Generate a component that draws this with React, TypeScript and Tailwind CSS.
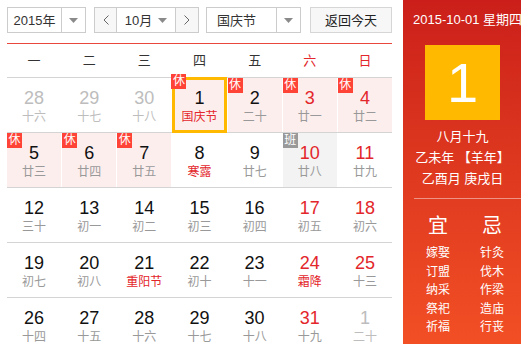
import React from "react";

type Day = {
  n: number;
  l: string;
  other?: boolean;
  red?: boolean;
  fest?: boolean;
  rest?: boolean;
  work?: boolean;
  today?: boolean;
};

const weeks: Day[][] = [
  [
    { n: 28, l: "十六", other: true },
    { n: 29, l: "十七", other: true },
    { n: 30, l: "十八", other: true },
    { n: 1, l: "国庆节", fest: true, rest: true, today: true },
    { n: 2, l: "二十", rest: true },
    { n: 3, l: "廿一", rest: true, red: true },
    { n: 4, l: "廿二", rest: true, red: true },
  ],
  [
    { n: 5, l: "廿三", rest: true },
    { n: 6, l: "廿四", rest: true },
    { n: 7, l: "廿五", rest: true },
    { n: 8, l: "寒露", fest: true },
    { n: 9, l: "廿七" },
    { n: 10, l: "廿八", work: true, red: true },
    { n: 11, l: "廿九", red: true },
  ],
  [
    { n: 12, l: "三十" },
    { n: 13, l: "初一" },
    { n: 14, l: "初二" },
    { n: 15, l: "初三" },
    { n: 16, l: "初四" },
    { n: 17, l: "初五", red: true },
    { n: 18, l: "初六", red: true },
  ],
  [
    { n: 19, l: "初七" },
    { n: 20, l: "初八" },
    { n: 21, l: "重阳节", fest: true },
    { n: 22, l: "初十" },
    { n: 23, l: "十一" },
    { n: 24, l: "霜降", fest: true, red: true },
    { n: 25, l: "十三", red: true },
  ],
  [
    { n: 26, l: "十四" },
    { n: 27, l: "十五" },
    { n: 28, l: "十六" },
    { n: 29, l: "十七" },
    { n: 30, l: "十八" },
    { n: 31, l: "十九", red: true },
    { n: 1, l: "二十", other: true },
  ],
];

const Caret = () => (
  <svg width="9" height="5" viewBox="0 0 9 5">
    <path d="M0 0 L9 0 L4.5 5 Z" fill="#8a8a8a" />
  </svg>
);

const Chevron = ({ dir }: { dir: "l" | "r" }) => (
  <svg width="6" height="10" viewBox="0 0 6 10">
    <path
      d={dir === "l" ? "M5.5 0.5 L1 5 L5.5 9.5" : "M0.5 0.5 L5 5 L0.5 9.5"}
      fill="none"
      stroke="#666"
      strokeWidth="1"
    />
  </svg>
);

function Cell({ d }: { d: Day }) {
  let bg = "bg-white";
  if (d.rest) bg = "bg-[#fdeeee]";
  if (d.work) bg = "bg-[#f3f3f3]";
  let numColor = "text-[#111]";
  if (d.red) numColor = "text-[#e3262b]";
  if (d.other) numColor = "text-[#bdbdbd]";
  let lunarColor = "text-[#999]";
  if (d.fest) lunarColor = "text-[#e3262b]";
  if (d.other) lunarColor = "text-[#bdbdbd]";
  return (
    <div className={`relative h-[54px] ${bg} flex flex-col items-center pt-[10px]`}>
      <div className={`text-[18px] leading-[20px] ${numColor} font-['Liberation_Sans',sans-serif]`}>
        {d.n}
      </div>
      <div className={`text-[12px] leading-[18px] ${lunarColor}`}>{d.l}</div>
      {d.today && (
        <div className="absolute left-0 right-0 -top-px -bottom-px border-[3px] border-[#ffb900]" />
      )}
      {d.rest && (
        <div
          className={`absolute ${d.today ? "-top-[4px] -left-[1px]" : "top-0 left-0"} w-[15px] h-[15px] bg-[#ff4337] text-white text-[12px] leading-[15px] flex items-center justify-center`}
        >
          休
        </div>
      )}
      {d.work && (
        <div className="absolute top-0 left-0 w-[15px] h-[15px] bg-[#999] text-white text-[12px] leading-[15px] flex items-center justify-center">
          班
        </div>
      )}
    </div>
  );
}

export default function App() {
  return (
    <div className="flex w-[521px] h-[344px] overflow-hidden bg-white font-['Liberation_Sans','Noto_Sans_CJK_SC',sans-serif]">
      {/* left */}
      <div className="w-[403px] pl-[7px] pr-[11px] shrink-0">
        {/* toolbar */}
        <div className="h-[43px] pt-[7px] flex items-start text-[13px] text-[#333]">
          <div className="flex h-[26px] w-[79px] border border-[#ccc] bg-white">
            <div className="w-[54px] flex items-center justify-center border-r border-[#ccc] leading-none">
              2015年
            </div>
            <div className="flex-1 flex items-center justify-center">
              <Caret />
            </div>
          </div>
          <div className="ml-[8px] flex h-[26px] w-[105px] border border-[#ccc]">
            <div className="w-[22px] flex items-center justify-center border-r border-[#ccc] bg-[#f7f7f7]">
              <Chevron dir="l" />
            </div>
            <div className="w-[59px] flex items-center justify-center gap-[6px] border-r border-[#ccc] leading-none">
              <span>10月</span>
              <Caret />
            </div>
            <div className="flex-1 flex items-center justify-center bg-[#f7f7f7]">
              <Chevron dir="r" />
            </div>
          </div>
          <div className="ml-[7px] flex h-[26px] w-[95px] border border-[#ccc]">
            <div className="w-[70px] flex items-center pl-[10px] border-r border-[#ccc] leading-none">
              国庆节
            </div>
            <div className="flex-1 flex items-center justify-center">
              <Caret />
            </div>
          </div>
          <div className="ml-[9px] flex h-[26px] w-[82px] items-center justify-center border border-[#d6d6d6] bg-[#f7f7f7] leading-none text-[#222]">
            返回今天
          </div>
        </div>
        {/* weekday header */}
        <div className="border-t border-[#e8473c] border-b border-b-[#d4d4d4] grid grid-cols-7 gap-x-px h-[35px] items-center text-[13px] text-[#333]">
          {["一", "二", "三", "四", "五", "六", "日"].map((w, i) => (
            <div key={w} className={`text-center ${i >= 5 ? "text-[#e3262b]" : ""}`}>
              {w}
            </div>
          ))}
        </div>
        {weeks.map((wk, i) => (
          <div key={i} className="grid grid-cols-7 gap-x-px border-b border-[#d4d4d4]">
            {wk.map((d, j) => (
              <Cell key={j} d={d} />
            ))}
          </div>
        ))}
      </div>
      {/* right */}
      <div className="flex-1 bg-gradient-to-b from-[#cb1e1a] to-[#f24f25] text-white flex flex-col items-center">
        <div className="mt-[12px] text-[13px] leading-[16px] whitespace-nowrap pl-[10px] self-start">
          2015-10-01 星期四
        </div>
        <div className="mt-[17px] w-[75px] h-[75px] bg-[#ffba00] flex items-center justify-center text-[56px] leading-none font-['Liberation_Sans',sans-serif]">
          1
        </div>
        <div className="mt-[6px] text-[13px] leading-[21px] text-center whitespace-nowrap">
          <div>八月十九</div>
          <div>乙未年 【羊年】</div>
          <div>乙酉月 庚戌日</div>
        </div>
        <div className="mt-[9px] h-px w-[108px] self-end bg-[rgba(255,255,255,0.45)]" />
        <div className="w-full flex mt-[15px]">
          {[
            { t: "宜", items: ["嫁娶", "订盟", "纳采", "祭祀", "祈福"] },
            { t: "忌", items: ["针灸", "伐木", "作梁", "造庙", "行丧"] },
          ].map((c, i) => (
            <div key={c.t} className={`flex flex-col items-center ${i === 0 ? "w-[70px]" : "w-[38px]"}`}>
              <div className="text-[20px] leading-[24px] mb-[6px]">{c.t}</div>
              {c.items.map((it) => (
                <div key={it} className="text-[12px] leading-[18.5px]">
                  {it}
                </div>
              ))}
            </div>
          ))}
        </div>
      </div>
    </div>
  );
}
